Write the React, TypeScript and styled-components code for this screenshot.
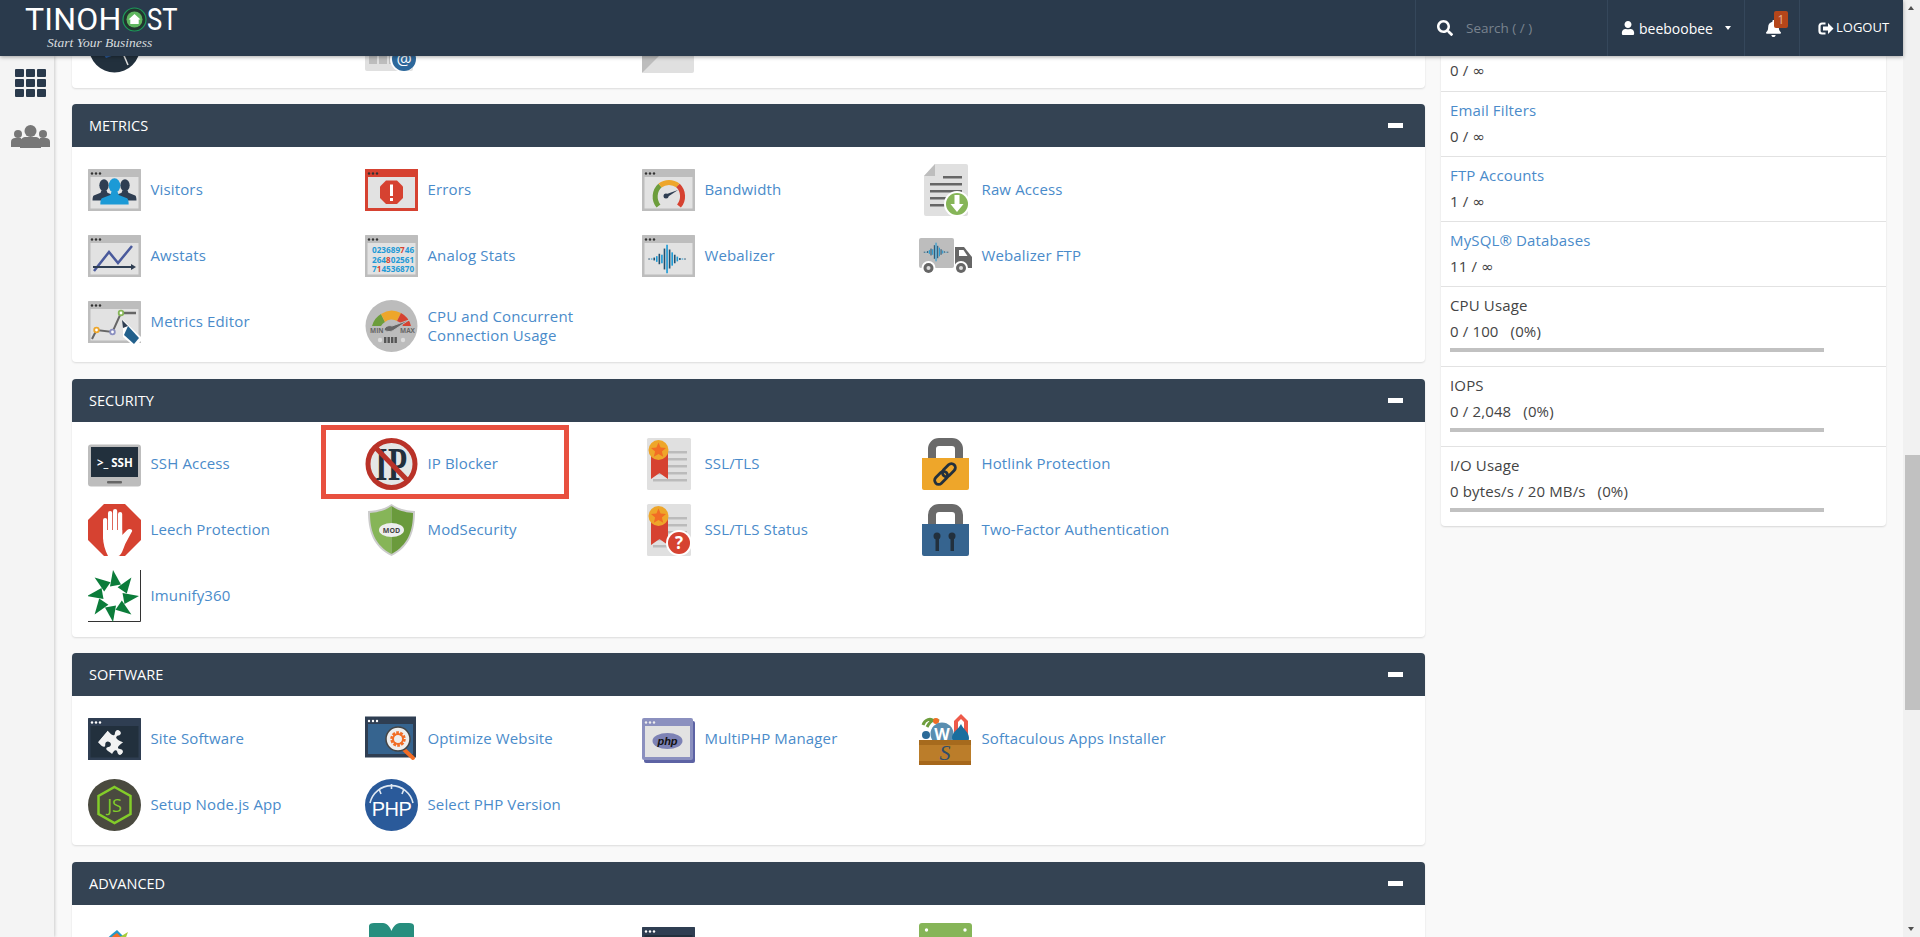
import React from 'react';
import styled, { createGlobalStyle } from 'styled-components';
import { FaSearch, FaUser, FaBell, FaPuzzlePiece } from 'react-icons/fa';

const Global = createGlobalStyle`
  html, body { margin: 0; padding: 0; height: 100%; overflow: hidden; }
  #root { height: 100%; }
  * { box-sizing: border-box; }
  body { font-family: "Open Sans", "DejaVu Sans", sans-serif; font-size: 15px; letter-spacing: .14px; color: #444; }
`;

const Page = styled.div`display: flex; width: 1920px; height: 937px; overflow: hidden; background: #f9f9f9;`;
const Viewport = styled.div`width: 1903px; display: flex; flex-direction: column; min-height: 0;`;
const TopBar = styled.header`
  position: relative; z-index: 3; height: 56px; flex: none; display: flex; background: #2a3a4c;
  box-shadow: 0 1px 4px rgba(0,0,0,.35); color: #fff; letter-spacing: 0;
`;
const Logo = styled.div`width: 1415px; padding-left: 25px; display: flex; flex-direction: column;`;
const Brand = styled.div`
  height: 38px; display: flex; align-items: center; font-family: Roboto, sans-serif; font-size: 32px; line-height: 38px; color: #fff; letter-spacing: .2px;
`;
const BrandEnd = styled.span`display: inline-block; width: 34px; transform: scaleX(.8); transform-origin: left center;`;
const BrandO = styled.svg`margin: 0 0 0 1px; flex: none;`;
const Tagline = styled.div`
  font-family: "Liberation Serif", serif; font-style: italic; font-size: 13.5px; line-height: 14px; color: #d8dcdf; margin: -2px 0 0 22px;
`;
const Cell = styled.div<{ $w: number; $pad: number; $gap?: number }>`
  width: ${p => p.$w}px; flex: none; display: flex; align-items: center; position: relative;
  padding-left: ${p => p.$pad}px; gap: ${p => p.$gap ?? 0}px; border-left: 1px solid #35475b;
`;
const Placeholder = styled.span`color: #79838e; font-size: 13.5px;`;
const UserName = styled.span`color: #fff; font-size: 14px; font-weight: 400; margin-left: 4px;`;
const Caret = styled.span`
  margin-left: 12px; width: 0; height: 0; border-left: 3.5px solid transparent; border-right: 3.5px solid transparent; border-top: 4px solid #fff;
`;
const Badge = styled.span`
  position: absolute; left: 29px; top: 11px; width: 14px; height: 17px; border-radius: 2px; background: #b5461a;
  color: #e6b59c; font-size: 12px; line-height: 17px; text-align: center;
`;
const LogoutText = styled.span`font-size: 13px; color: #fff; margin-left: 2px; margin-top: -2px;`;

const Row = styled.div`flex: 1; min-height: 0; display: flex; overflow: hidden;`;
const SideNav = styled.nav`
  width: 54px; flex: none; background: #f4f4f4; box-shadow: 1px 0 3px rgba(0,0,0,.18); padding-top: 13px;
  display: flex; flex-direction: column; align-items: center;
`;
const AppGrid = styled.div`display: grid; grid-template-columns: repeat(3, 9px); grid-auto-rows: 8px; gap: 2px; margin-left: 7px;`;
const AppCell = styled.i`background: #2a3a4c; border-radius: 1px;`;
const People = styled.svg`margin: 28px 0 0 7px;`;

const Content = styled.main`flex: 1; display: flex; gap: 16px; padding-left: 18px; min-width: 0;`;
const Stack = styled.div`width: 1353px; flex: none; display: flex; flex-direction: column;`;
const Stub = styled.section`
  height: 32px; flex: none; background: #fff; border-radius: 0 0 4px 4px; box-shadow: 0 1px 2px rgba(0,0,0,.12);
  padding: 0 0 15px 16px; overflow: hidden; display: flex; align-items: flex-end;
`;
const Panel = styled.section<{ $gap: number }>`
  flex: none; margin-top: ${p => p.$gap}px; background: #fff; border-radius: 4px; box-shadow: 0 1px 2px rgba(0,0,0,.12);
`;
const PanelHead = styled.div`
  height: 43px; background: #344353; border-radius: 4px 4px 0 0; display: flex; align-items: center; justify-content: space-between;
  padding: 0 22px 0 17px; color: #fff; font-size: 14.5px; text-transform: uppercase; letter-spacing: 0;
`;
const Minus = styled.i`width: 15px; height: 4.5px; background: #fff;`;
const Grid = styled.div<{ $top: number; $bottom: number }>`
  display: grid; grid-template-columns: repeat(4, 277px); grid-auto-rows: 66px; padding: ${p => p.$top}px 16px ${p => p.$bottom}px;
`;
const IconRow = styled.div`display: grid; grid-template-columns: repeat(4, 277px); align-items: end;`;
const Tile = styled.a<{ $tall?: boolean }>`
  position: relative; display: flex; align-items: center; gap: 9.5px; height: 66px; color: #4a8bca; line-height: 19px;
  padding-top: ${p => (p.$tall ? 8 : 0)}px;
`;
const IconBox = styled.svg`width: 53px; height: 52px; flex: none; display: block;`;
const Label = styled.span<{ $tall?: boolean }>`max-width: 205px; padding-bottom: ${p => (p.$tall ? 0 : 2)}px;`;
const Highlight = styled.span`
  position: absolute; left: -44px; top: -6px; width: 248px; height: 74px; border: 5px solid #e8503f; pointer-events: none;
`;

const Aside = styled.aside`
  width: 445px; flex: none; background: #fff; border-radius: 0 0 4px 4px; box-shadow: 0 1px 2px rgba(0,0,0,.14); align-self: flex-start;
`;
const StatStub = styled.div`height: 36px; padding: 4px 9px 0; line-height: 20px; border-bottom: 1px solid #e2e2e2;`;
const Stat = styled.div<{ $last?: boolean }>`
  padding: 8px 9px 0; height: 65px; border-bottom: ${p => (p.$last ? 'none' : '1px solid #e2e2e2')}; line-height: 20px;
`;
const Usage = styled(Stat)`height: ${p => (p.$last ? 79 : 80)}px;`;
const StatLink = styled.a`display: block; color: #4a8bca;`;
const StatName = styled.div`color: #444;`;
const StatValue = styled.div`margin-top: 6px;`;
const Pct = styled.span`margin-left: 12px;`;
const Inf = styled.span`font-size: 15px; font-family: "DejaVu Sans", sans-serif;`;
const Bar = styled.div`width: 374px; height: 4px; background: #c1c1c1; margin-top: 7px;`;

const Scroll = styled.div`width: 17px; flex: none; background: #f1f1f1; position: relative;`;
const ArrowUp = styled.i`
  position: absolute; left: 5px; top: 6px; width: 0; height: 0; border-left: 3.5px solid transparent; border-right: 3.5px solid transparent; border-bottom: 4px solid #505050;
`;
const ArrowDown = styled.i`
  position: absolute; left: 5px; bottom: 6px; width: 0; height: 0; border-left: 3.5px solid transparent; border-right: 3.5px solid transparent; border-top: 4px solid #505050;
`;
const Thumb = styled.i`position: absolute; left: 2px; right: 0; top: 455px; height: 255px; background: #c1c1c1;`;

const Dots: React.FC<{ c: string; y?: number }> = ({ c, y = 9.5 }) => (
  <g fill={c}><circle cx="4" cy={y} r="1.2" /><circle cx="8" cy={y} r="1.2" /><circle cx="12" cy={y} r="1.2" /></g>
);
const Win: React.FC<{ frame?: string; inner?: string; dots?: string; children?: React.ReactNode }> = ({ frame = '#bdbdbd', inner = '#e2e2e2', dots = '#333', children }) => (
  <>
    <rect x="0" y="5" width="53" height="42" rx=".5" fill={frame} />
    <Dots c={dots} />
    <rect x="2.5" y="13" width="48" height="31.5" fill={inner} />
    {children}
  </>
);
const Wave: React.FC<{ cx: number; cy: number; k?: number }> = ({ cx, cy, k = 1 }) => {
  const hs = [1, 1, 3, 6, 11, 9, 22, 30, 20, 14, 9, 5, 2, 1, 1];
  return (
    <g>
      {hs.map((h, i) => (
        <rect key={i} x={cx + (i - 7) * 2.7 * k - 0.8 * k} y={cy - (h * k) / 2} width={1.7 * k} height={Math.max(h * k, 1)} fill={i % 2 ? '#1c9ad6' : '#22506f'} />
      ))}
    </g>
  );
};
const Person: React.FC<{ x: number; y: number; s: number; c: string }> = ({ x, y, s, c }) => (
  <g transform={`translate(${x} ${y}) scale(${s})`} fill={c}>
    <ellipse cx="0" cy="-8" rx="5.5" ry="7" />
    <path d="M-3-2h6l1 3 8 3c1 .5 1.500 3 1.500 6h-27c0-3 .5-5.500 1.500-6l8-3z" />
  </g>
);
const Cert: React.FC = () => (
  <>
    <rect x="5" y="0" width="44" height="52" rx="1.500" fill="#e0e0e0" />
    <g fill="#bbb">
      <rect x="24" y="13" width="21" height="2.500" /><rect x="24" y="20" width="21" height="2.500" /><rect x="24" y="27" width="21" height="2.500" />
      <rect x="11" y="34" width="34" height="2.500" /><rect x="11" y="41" width="34" height="2.500" />
    </g>
    <path d="M9 14h17v27l-8.500-6-8.500 6z" fill="#d64231" />
    <circle cx="16.500" cy="12" r="10" fill="#eea62a" />
    <polygon fill="#f26d25" points="16.500,4.500 18.600,9.500 24,10 19.900,13.500 21.200,18.800 16.500,16 11.800,18.800 13.100,13.500 9,10 14.400,9.500" />
  </>
);
const Lock: React.FC<{ c: string; children: React.ReactNode }> = ({ c, children }) => (
  <>
    <path d="M13 22V11c0-4 3-7 7-7h13c4 0 7 3 7 7v11" fill="none" stroke="#6a6a6a" strokeWidth="8" />
    <path d="M3 20h47v30a2 2 0 0 1-2 2H5a2 2 0 0 1-2-2z" fill={c} />
    {children}
  </>
);
const T: React.FC<React.SVGProps<SVGTextElement>> = p => <text fontFamily="'Open Sans', sans-serif" {...p} />;

const icons: Record<string, React.ReactNode> = {
  visitors: <Win><Person x={16} y={28} s={.85} c="#2f3e52" /><Person x={37} y={28} s={.85} c="#2f3e52" /><Person x={26.500} y={30} s={1.050} c="#1c9ad6" /></Win>,
  errors: <>
    <rect x="0" y="5" width="53" height="42" fill="#d64231" /><Dots c="#333" />
    <rect x="3" y="13" width="47" height="31" fill="#e2e2e2" />
    <polygon fill="#d64231" points="21,16.500 32,16.500 38,22.500 38,34 32,40 21,40 15,34 15,22.500" />
    <rect x="25" y="20.500" width="3" height="11.500" fill="#fff" /><rect x="25" y="34" width="3" height="3" fill="#fff" />
  </>,
  bandwidth: <Win>
    <g fill="none" strokeWidth="5">
      <path d="M16.500 42A15 15 0 0 1 18 21.500" stroke="#6d9d3c" /><path d="M18 21.500A15 15 0 0 1 36 21.500" stroke="#eea62a" /><path d="M36 21.500A15 15 0 0 1 37 42" stroke="#d64231" />
    </g>
    <path d="M22 31l14-5-12 8z" fill="#2f3e52" /><circle cx="24" cy="32" r="2.500" fill="#2f3e52" />
  </Win>,
  raw: <>
    <path d="M16 0h31a2 2 0 0 1 2 2v48a2 2 0 0 1-2 2H7a2 2 0 0 1-2-2V12z" fill="#e0e0e0" /><path d="M16 0v12H5z" fill="#bdbdbd" />
    <g fill="#666"><rect x="24" y="12" width="19" height="2.500" /><rect x="11" y="19" width="32" height="2.500" /><rect x="11" y="26" width="32" height="2.500" /><rect x="11" y="33" width="18" height="2.500" /><rect x="11" y="40" width="15" height="2.500" /></g>
    <circle cx="38" cy="40" r="13" fill="#fff" /><circle cx="38" cy="40" r="11" fill="#86b558" />
    <path d="M35.500 31h5v9h4l-6.500 8-6.500-8h4z" fill="#fff" />
  </>,
  awstats: <Win><path d="M6 41L21 22l9 11 14-17" fill="none" stroke="#4a5a9c" strokeWidth="2.500" /><path d="M5 37h39" stroke="#2f3e52" strokeWidth="2" /><path d="M48 37l-5-3v6z" fill="#2f3e52" /></Win>,
  analog: <Win>
    <g fontSize="8.200" fontWeight="700" fill="#1f9ad6" fontFamily="'Open Sans', sans-serif" letterSpacing="0">
      <text x="7" y="23">023689<tspan fill="#d64231">7</tspan>46</text>
      <text x="7" y="32.500">264<tspan fill="#d64231">8</tspan>02561</text>
      <text x="7" y="42">7<tspan fill="#d64231">1</tspan>4536870</text>
    </g>
  </Win>,
  webalizer: <Win><Wave cx={25} cy={29} k={.95} /></Win>,
  truck: <>
    <rect x="0" y="8" width="35" height="30" rx="2" fill="#bdbdbd" /><Wave cx={17} cy={22} k={.62} />
    <path d="M36 17h9l8 10v11H36z" fill="#666" /><path d="M40 20h4.500l4 6H40z" fill="#fff" />
    <circle cx="9.500" cy="38" r="7" fill="#fff" /><circle cx="9.500" cy="38" r="5" fill="#666" /><circle cx="9.500" cy="38" r="2" fill="#ddd" />
    <circle cx="42" cy="38" r="7" fill="#fff" /><circle cx="42" cy="38" r="5" fill="#666" /><circle cx="42" cy="38" r="2" fill="#ddd" />
  </>,
  editor: <Win>
    <path d="M33 17h15" stroke="#666" strokeWidth="2.500" />
    <path d="M4 43L8.500 34l16 2 8.500-19" fill="none" stroke="#666" strokeWidth="2" />
    <circle cx="8.500" cy="34" r="2.300" fill="#fff" stroke="#eea62a" strokeWidth="1.800" /><circle cx="24.500" cy="36" r="2.300" fill="#fff" stroke="#8a8fc0" strokeWidth="1.800" /><circle cx="33" cy="17" r="2.300" fill="#fff" stroke="#86b558" strokeWidth="1.800" />
    <path d="M35 24l20 19-8 8-12-10z" fill="#fff" /><path d="M40 30l11 12-5 6-10-9z" fill="#22608c" /><path d="M34 24l6 6-5 2z" fill="#2f3e52" />
  </Win>,
  cpu: <>
    <circle cx="26.500" cy="26" r="26" fill="#bcbcbc" />
    <path d="M7 26A19.500 19.500 0 0 1 16 14l4 8a10 10 0 0 0-4 4z" fill="#6d9d3c" />
    <path d="M16 14A19.500 19.500 0 0 1 36 13l-4 8a10 10 0 0 0-12 1z" fill="#eea62a" />
    <path d="M36 13A19.500 19.500 0 0 1 46 26H38a10 10 0 0 0-6-5z" fill="#d64231" />
    <path d="M19 30c1-4 5-5 8-4l17-6-15 10c-3 2-7 2-10 0z" fill="#666" stroke="#bcbcbc" strokeWidth="1" />
    <T x="5" y="33" fontSize="6.500" fontWeight="700" fill="#666" letterSpacing="0">MIN</T><T x="35" y="33" fontSize="6.500" fontWeight="700" fill="#666" letterSpacing="0">MAX</T>
    <circle cx="15" cy="40" r="2.200" fill="#ddd" /><circle cx="38" cy="40" r="2.200" fill="#ddd" />
    <g fill="#555"><rect x="19" y="37" width="2.400" height="6" /><rect x="22.500" y="37" width="2.400" height="6" /><rect x="26" y="37" width="2.400" height="6" /><rect x="29.500" y="37" width="2.400" height="6" /></g>
  </>,
  ssh: <>
    <rect x="0" y="6.500" width="53" height="42" rx="3" fill="#bdbdbd" />
    <rect x="3" y="9" width="47" height="30" fill="#22303d" />
    <rect x="19" y="43" width="15" height="2.500" rx="1" fill="#666" />
    <T x="9" y="29" fontSize="11.500" fontWeight="700" fill="#fff" letterSpacing="0">&gt;_ SSH</T>
  </>,
  ip: <>
    <circle cx="26.500" cy="26" r="23.500" fill="#e4e6e6" stroke="#b93228" strokeWidth="5" />
    <g transform="translate(26.500 0) scale(.68 1)">
      <text x="0" y="42" textAnchor="middle" fontFamily="'Liberation Serif', serif" fontWeight="700" fontSize="46" fill="#22303d" letterSpacing="1">IP</text>
    </g>
    <path d="M10 9l33 34" stroke="#b93228" strokeWidth="5" />
  </>,
  ssl: <Cert />,
  hotlink: <Lock c="#eea62a">
    <g fill="none" stroke="#22303d" strokeWidth="2.800" transform="rotate(-45 26 36)">
      <rect x="13" y="32" width="15" height="8" rx="4" /><rect x="24" y="32" width="15" height="8" rx="4" />
    </g>
  </Lock>,
  leech: <>
    <polygon fill="#d64231" points="16,0 37,0 53,16 53,36 37,52 16,52 0,36 0,16" />
    <g fill="#fff">
      <rect x="15" y="14" width="4.200" height="22" rx="2.100" /><rect x="20" y="7" width="4.200" height="28" rx="2.100" /><rect x="25" y="5" width="4.200" height="30" rx="2.100" /><rect x="30" y="8" width="4.200" height="28" rx="2.100" />
      <path d="M15 26h19.200v5l5-5c2-2 5-1 5 1l-7 13c-2 5-4 12-7 12H20c-3-6-5-12-5-20z" />
    </g>
  </>,
  mod: <>
    <path d="M26.500 0C20 5 10 7 3 7c0 20 5 36 23.500 45C45 43 50 27 50 7 43 7 33 5 26.500 0z" fill="#ccc" />
    <path d="M26.500 2C20 7 11 8.500 5 9c0 18 5 32 21.500 41z" fill="#86b558" /><path d="M26.500 2C33 7 42 8.500 48 9c0 18-5 32-21.500 41z" fill="#6a9a3c" />
    <ellipse cx="26.500" cy="26" rx="12.500" ry="7" fill="#eee" />
    <T x="26.500" y="28.500" textAnchor="middle" fontSize="7" fontWeight="700" fill="#444" letterSpacing="0">MOD</T>
  </>,
  sslstatus: <>
    <Cert />
    <circle cx="37" cy="39" r="13" fill="#fff" /><circle cx="37" cy="39" r="11" fill="#d64231" />
    <T x="37" y="45" textAnchor="middle" fontSize="17" fontWeight="700" fill="#fff">?</T>
  </>,
  twofa: <Lock c="#36648f">
    <g fill="#22303d"><circle cx="18" cy="32" r="3.500" /><rect x="16.500" y="32" width="3.500" height="15" /><circle cx="33" cy="32" r="3.500" /><rect x="31.500" y="32" width="3.500" height="15" /></g>
  </Lock>,
  imunify: <>
    <path d="M52.500 0v51.500H0" fill="none" stroke="#333" strokeWidth="1" />
    <g fill="#0b7c3a">
      {[0, 45, 90, 135, 180, 225, 270, 315].map(a => (
        <path key={a} transform={`rotate(${a} 25 26)`} d="M25 0l8 14.500-11 2z" />
      ))}
    </g>
    <circle cx="25" cy="26" r="8" fill="#fff" />
  </>,
  site: <Win frame="#2f3e52" inner="#22303d" dots="#fff">
    <g transform="rotate(40 27 29)"><FaPuzzlePiece x="14" y="16" size="26" color="#f2f2f2" /></g>
  </Win>,
  optimize: <>
    <rect x="0" y="3.500" width="51" height="41" fill="#2f3e52" /><Dots c="#fff" y={8} />
    <rect x="3" y="11" width="45" height="30" fill="#36648f" />
    <path d="M33 31l15 14" stroke="#f26d25" strokeWidth="4" strokeLinecap="round" />
    <circle cx="33" cy="26" r="12" fill="#eee" stroke="#444" strokeWidth="1.500" />
    <circle cx="33" cy="26" r="6" fill="none" stroke="#f26d25" strokeWidth="3.500" strokeDasharray="2.500 1.200" /><circle cx="33" cy="26" r="5" fill="none" stroke="#f26d25" strokeWidth="2" />
  </>,
  multiphp: <>
    <rect x="2" y="8" width="51" height="42" rx="2" fill="#5d63a4" />
    <rect x="0" y="5" width="51" height="42" rx="2" fill="#8b90bf" />
    <Dots c="#eee" />
    <rect x="3" y="13" width="45" height="31" fill="#e2e2e2" />
    <ellipse cx="25.500" cy="28" rx="15" ry="8" fill="#7d82b5" />
    <text x="25.500" y="32" textAnchor="middle" fontFamily="'Liberation Sans', sans-serif" fontStyle="italic" fontWeight="700" fontSize="11" fill="#111" letterSpacing="0">php</text>
  </>,
  softaculous: <>
    <path d="M4 12c2-6 8-7 10-4M8 14c4-8 8-8 12-6" fill="none" stroke="#6d9d3c" strokeWidth="3" /><circle cx="17" cy="8" r="3" fill="#f26d25" />
    <path d="M35 8l7-7 7 7v14h-14z" fill="#ee5a4a" /><path d="M39 9l3-3 3 3v12h-6z" fill="#fff" />
    <circle cx="7" cy="22" r="4" fill="#2b6a98" />
    <circle cx="23" cy="21" r="11.500" fill="#5a8eb0" /><T x="23" y="27" textAnchor="middle" fontSize="16" fontWeight="700" fill="#fff" letterSpacing="0">W</T>
    <path d="M42 11c2 5 8 8 8 14 0 2-1 4-2 4H35c-1 0-2-2-2-4 0-6 6-8 9-14z" fill="#1a6e9e" />
    <rect x="0" y="27" width="52" height="25" fill="#bb7d2a" /><rect x="0" y="27" width="52" height="5" fill="#a66a1d" />
    <rect x="0" y="48" width="52" height="4" fill="#a6671b" />
    <text x="26" y="47" textAnchor="middle" fontFamily="'Liberation Serif', serif" fontStyle="italic" fontSize="22" fill="#2f4d6c">S</text>
  </>,
  node: <>
    <ellipse cx="26.500" cy="26" rx="26.500" ry="26" fill="#4a4a3f" />
    <path d="M26.500 8l16 9v18l-16 9-16-9V17z" fill="none" stroke="#83cd29" strokeWidth="2.500" />
    <text x="26.500" y="33" textAnchor="middle" fontFamily="'Open Sans', sans-serif" fontSize="18" fill="#83cd29" letterSpacing="0">JS</text>
  </>,
  php: <>
    <ellipse cx="26.500" cy="26" rx="26.500" ry="26" fill="#2a5a9a" />
    <path d="M5 24A22 22 0 0 1 48 24" fill="none" stroke="#dfe8f2" strokeWidth="1.600" />
    <g stroke="#dfe8f2" strokeWidth="1.600"><path d="M14 10l2 5M26.500 5v5M39 10l-2 5" /></g>
    <text x="26.500" y="37" textAnchor="middle" fontFamily="'Liberation Sans', sans-serif" fontSize="20" fill="#fff" letterSpacing="-.5">PHP</text>
  </>,
  topa: <>
    <circle cx="26.500" cy="26" r="25.500" fill="#22303d" />
    <path d="M34 30l6 14" stroke="#ddd" strokeWidth="1.500" />
    <path d="M12 28l16-6 4 10-14 5z" fill="#2a5a9a" />
  </>,
  topb: <>
    <rect x="0" y="20" width="48" height="30" rx="2" fill="#e0e0e0" />
    <g fill="#bdbdbd"><rect x="4" y="35" width="8" height="8" /><rect x="14" y="35" width="8" height="8" /><rect x="24" y="35" width="8" height="8" /></g>
    <circle cx="38" cy="38" r="13" fill="#fff" /><circle cx="39" cy="38" r="12" fill="#2d689b" />
    <T x="39" y="44" textAnchor="middle" fontSize="17" fill="#fff" letterSpacing="0">@</T>
  </>,
  topc: <>
    <rect x="0" y="0" width="52" height="52" rx="2" fill="#e0e0e0" />
    <path d="M0 0l26 26L0 52z" fill="#bdbdbd" />
  </>,
  lite: <>
    <path d="M13 18L24 8l5-4 6 6-6 10z" fill="#2399c9" /><path d="M16 18l10-9 3-2 4 4-6 9z" fill="#f26d25" /><path d="M30 12l10-6-3 8-7 6z" fill="#a7cc3a" />
  </>,
  teal: <path d="M4 4c0-2 2-3 5-3h9c4 0 7 4 8.500 8C28 5 31 1 35 1h9c3 0 5 1 5 3v44H4z" fill="#278e7e" />,
  darkwin: <Win frame="#2f3e52" inner="#22303d" dots="#fff" />,
  rack: <>
    <path d="M0 4a3 3 0 0 1 3-3h47a3 3 0 0 1 3 3v11H0z" fill="#86b558" />
    <rect x="0" y="15" width="53" height="6" fill="#ccc" />
    <circle cx="7.500" cy="8" r="1.700" fill="#fff" /><circle cx="46" cy="8" r="1.700" fill="#fff" />
  </>,
};

const Ico: React.FC<{ n: string }> = ({ n }) => <IconBox viewBox="0 0 53 52">{icons[n]}</IconBox>;

type Item = [string, string, boolean?];
const sections: { title: string; items: Item[]; top: number; bottom: number; gap: number }[] = [
  { title: 'Metrics', gap: 16, top: 10, bottom: 7, items: [['visitors', 'Visitors'], ['errors', 'Errors'], ['bandwidth', 'Bandwidth'], ['raw', 'Raw Access'], ['awstats', 'Awstats'], ['analog', 'Analog Stats'], ['webalizer', 'Webalizer'], ['truck', 'Webalizer FTP'], ['editor', 'Metrics Editor'], ['cpu', 'CPU and Concurrent Connection Usage', true]] },
  { title: 'Security', gap: 17, top: 9, bottom: 8, items: [['ssh', 'SSH Access'], ['ip', 'IP Blocker'], ['ssl', 'SSL/TLS'], ['hotlink', 'Hotlink Protection'], ['leech', 'Leech Protection'], ['mod', 'ModSecurity'], ['sslstatus', 'SSL/TLS Status'], ['twofa', 'Two-Factor Authentication'], ['imunify', 'Imunify360']] },
  { title: 'Software', gap: 16, top: 10, bottom: 7, items: [['site', 'Site Software'], ['optimize', 'Optimize Website'], ['multiphp', 'MultiPHP Manager'], ['softaculous', 'Softaculous Apps Installer'], ['node', 'Setup Node.js App'], ['php', 'Select PHP Version']] },
  { title: 'Advanced', gap: 17, top: 10, bottom: 7, items: [['lite', 'LiteSpeed Web Cache Manager', true], ['teal', 'Memcached'], ['darkwin', 'Terminal'], ['rack', 'Cron Jobs']] },
];

const limits: [string, string][] = [['Email Filters', '0'], ['FTP Accounts', '1'], ['MySQL® Databases', '11']];
const usage: [string, string][] = [['CPU Usage', '0 / 100'], ['IOPS', '0 / 2,048'], ['I/O Usage', '0 bytes/s / 20 MB/s']];

export default function App() {
  return (
    <Page>
      <Global />
      <Viewport>
        <TopBar>
          <Logo>
            <Brand>
              TINOH
              <BrandO width="25" height="25" viewBox="0 0 25 25">
                <circle cx="12.500" cy="12.500" r="11.500" fill="#22362f" stroke="#1d9a5a" strokeWidth="1.200" />
                <circle cx="12.500" cy="12.500" r="8" fill="#5fb65f" />
                <path d="M12.500 7l6 5.500h-1.800V17h-8.400v-4.500H6.500z" fill="#fff" />
              </BrandO>
              <BrandEnd>ST</BrandEnd>
            </Brand>
            <Tagline>Start Your Business</Tagline>
          </Logo>
          <Cell $w={192} $pad={21} $gap={13}>
            <FaSearch size={16} color="#fff" />
            <Placeholder>Search ( / )</Placeholder>
          </Cell>
          <Cell $w={137} $pad={13}>
            <FaUser size={14} color="#fff" />
            <UserName>beeboobee</UserName>
            <Caret />
          </Cell>
          <Cell $w={55} $pad={20}>
            <FaBell size={17} color="#fff" />
            <Badge>1</Badge>
          </Cell>
          <Cell $w={104} $pad={18}>
            <svg width="16" height="13" viewBox="0 0 16 13">
              <path d="M7.500 1.500H4A2.500 2.500 0 0 0 1.500 4v5A2.500 2.500 0 0 0 4 11.500h3.500" fill="none" stroke="#fff" strokeWidth="2.200" />
              <path d="M5 4.500h5V1l5.500 5.500L10 12V8.500H5z" fill="#fff" />
            </svg>
            <LogoutText>LOGOUT</LogoutText>
          </Cell>
        </TopBar>
        <Row>
          <SideNav>
            <AppGrid>{Array.from({ length: 9 }, (_, i) => <AppCell key={i} />)}</AppGrid>
            <People width="39" height="23" viewBox="0 0 39 23" fill="#777">
              <circle cx="7" cy="9" r="4" /><circle cx="32" cy="9" r="4" />
              <path d="M0 22v-5c0-3 2-4 4-4h6v9z M39 22v-5c0-3-2-4-4-4h-6v9z" />
              <circle cx="19.500" cy="6" r="6" fill="#777" />
              <path d="M9 23v-6c0-3 3-5 6-5h9c3 0 6 2 6 5v6z" />
            </People>
          </SideNav>
          <Content>
            <Stack>
              <Stub>
                <IconRow>
                  <Ico n="topa" /><Ico n="topb" /><Ico n="topc" />
                </IconRow>
              </Stub>
              {sections.map(s => (
                <Panel key={s.title} $gap={s.gap}>
                  <PanelHead>{s.title}<Minus /></PanelHead>
                  <Grid $top={s.top} $bottom={s.bottom}>
                    {s.items.map(([n, t, tall]) => (
                      <Tile key={n} $tall={tall}>
                        <Ico n={n} />
                        <Label $tall={tall}>{t}</Label>
                        {n === 'ip' && <Highlight />}
                      </Tile>
                    ))}
                  </Grid>
                </Panel>
              ))}
            </Stack>
            <Aside>
              <StatStub>0 / <Inf>∞</Inf></StatStub>
              {limits.map(([t, v]) => (
                <Stat key={t}>
                  <StatLink>{t}</StatLink>
                  <StatValue>{v} / <Inf>∞</Inf></StatValue>
                </Stat>
              ))}
              {usage.map(([t, v], i) => (
                <Usage key={t} $last={i === usage.length - 1}>
                  <StatName>{t}</StatName>
                  <StatValue>{v}<Pct>(0%)</Pct></StatValue>
                  <Bar />
                </Usage>
              ))}
            </Aside>
          </Content>
        </Row>
      </Viewport>
      <Scroll><ArrowUp /><Thumb /><ArrowDown /></Scroll>
    </Page>
  );
}
